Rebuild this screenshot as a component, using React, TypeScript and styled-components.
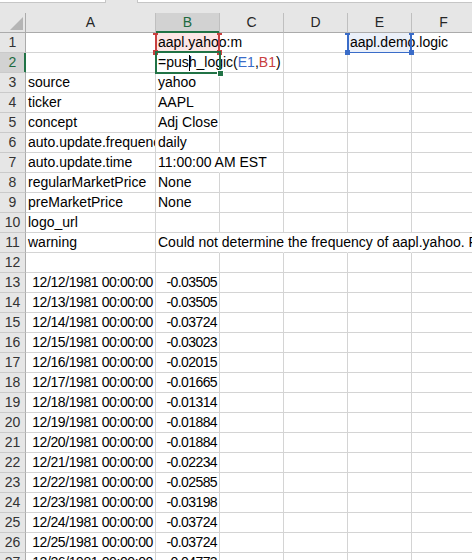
import styled, { createGlobalStyle } from 'styled-components';

const GRID = '#d4d4d4';
const HEAD_BG = '#e6e6e6';
const HEAD_LINE = '#ababab';
const SEL_BG = '#d2d2d2';
const GREEN = '#217346';
const RED = '#c8403f';
const BLUE = '#3a6cc8';
const PINK = '#fce6e6';
const BLUE_FILL = '#ebf0f9';

const GlobalStyle = createGlobalStyle`
  html, body {
    margin: 0;
    padding: 0;
    background: #fff;
  }
`;

const Page = styled.div`
  width: 472px;
  height: 560px;
  overflow: hidden;
  background: #fff;
  font-family: 'Liberation Sans', Arial, sans-serif;
  font-size: 14px;
  color: #000;
`;

const FormulaStrip = styled.div`
  display: flex;
  gap: 31px;
  height: 13px;
  background: ${HEAD_BG};
`;

const NameBox = styled.div`
  width: 106px;
  height: 3px;
  box-sizing: border-box;
  background: #fff;
  border-right: 1px solid #c6c6c6;
  border-bottom: 1px solid #c6c6c6;
`;

const FormulaInput = styled.div`
  flex: 1;
  height: 3px;
  box-sizing: border-box;
  background: #fff;
  border-left: 1px solid #c6c6c6;
  border-bottom: 1px solid #c6c6c6;
`;

const Row = styled.div`
  display: flex;
  height: 20px;
`;

const HeaderRow = styled(Row)`
  position: relative;
  z-index: 3;
`;

const Corner = styled.div`
  flex: 0 0 26px;
  box-sizing: border-box;
  height: 20px;
  padding: 0 2px 2px 0;
  display: flex;
  align-items: flex-end;
  justify-content: flex-end;
  background: ${HEAD_BG};
  border-right: 1px solid ${HEAD_LINE};
  border-bottom: 1px solid ${HEAD_LINE};
`;

const ColHead = styled.div<{ $w: number; $active?: boolean }>`
  flex: 0 0 ${({ $w }) => $w}px;
  box-sizing: border-box;
  height: 20px;
  background: ${({ $active }) => ($active ? SEL_BG : HEAD_BG)};
  border-right: 1px solid #bfbfbf;
  border-bottom: 1px solid ${({ $active }) => ($active ? GREEN : HEAD_LINE)};
  box-shadow: ${({ $active }) => ($active ? `inset 0 -1px 0 ${GREEN}` : 'none')};
  color: ${({ $active }) => ($active ? '#1d6a3f' : '#262626')};
  text-align: center;
  line-height: 19px;
`;

const RowHead = styled.div<{ $active?: boolean }>`
  flex: 0 0 26px;
  box-sizing: border-box;
  height: 20px;
  background: ${({ $active }) => ($active ? SEL_BG : HEAD_BG)};
  border-right: 1px solid ${({ $active }) => ($active ? GREEN : HEAD_LINE)};
  border-bottom: 1px solid #cacaca;
  box-shadow: ${({ $active }) => ($active ? `inset -1px 0 0 ${GREEN}` : 'none')};
  color: ${({ $active }) => ($active ? '#1d6a3f' : '#333')};
  text-align: center;
  line-height: 19px;
`;

const Cell = styled.div<{
  $w: number;
  $open?: boolean;
  $clip?: boolean;
  $right?: boolean;
  $tight?: number;
  $fill?: string;
}>`
  position: relative;
  flex: 0 0 ${({ $w }) => $w}px;
  min-width: 0;
  box-sizing: border-box;
  height: 20px;
  padding: ${({ $right }) => ($right ? '0 2px 0 0' : '0 0 0 2px')};
  border-bottom: 1px solid ${GRID};
  border-right: 1px solid ${({ $open }) => ($open ? 'transparent' : GRID)};
  background: ${({ $fill }) => $fill ?? 'transparent'};
  text-align: ${({ $right }) => ($right ? 'right' : 'left')};
  letter-spacing: ${({ $tight }) => ($tight ? `${$tight}px` : 'normal')};
  line-height: 19px;
  white-space: nowrap;
  overflow: ${({ $clip }) => ($clip ? 'hidden' : 'visible')};
`;

const RefFrame = styled.div<{ $color: string }>`
  position: absolute;
  z-index: 2;
  left: -1px;
  right: -1px;
  top: -1px;
  bottom: -1px;
  box-shadow: inset 2px 0 0 ${({ $color }) => $color}, inset -2px 0 0 ${({ $color }) => $color},
    inset 0 1px 0 ${({ $color }) => $color}, inset 0 -1px 0 ${({ $color }) => $color};
  pointer-events: none;
`;

const Handle = styled.div<{ $color: string; $x: 'left' | 'right'; $y: 'top' | 'bottom' }>`
  position: absolute;
  width: 5px;
  height: 5px;
  background: ${({ $color }) => $color};
  ${({ $x }) => $x}: -2px;
  ${({ $y }) => $y}: -2px;
`;

const SelFrame = styled.div`
  position: absolute;
  z-index: 2;
  left: -1px;
  right: -2px;
  top: -2px;
  bottom: -2px;
  border: 2px solid ${GREEN};
  pointer-events: none;
`;

const FillHandle = styled.div`
  position: absolute;
  right: -5px;
  bottom: -5px;
  width: 5px;
  height: 5px;
  background: ${GREEN};
  border: 1px solid #fff;
`;

const Caret = styled.span`
  display: inline-block;
  width: 1px;
  height: 16px;
  margin-right: -1px;
  background: #000;
  vertical-align: -4px;
`;

const RefText = styled.span<{ $color: string }>`
  color: ${({ $color }) => $color};
`;

const COLS = [
  { key: 'A', w: 130 },
  { key: 'B', w: 64 },
  { key: 'C', w: 64 },
  { key: 'D', w: 64 },
  { key: 'E', w: 64 },
  { key: 'F', w: 64 },
];

const infoRows: { a: string; b: string; open?: number[] }[] = [
  { a: 'source', b: 'yahoo' },
  { a: 'ticker', b: 'AAPL' },
  { a: 'concept', b: 'Adj Close' },
  { a: 'auto.update.frequency', b: 'daily' },
  { a: 'auto.update.time', b: '11:00:00 AM EST', open: [1] },
  { a: 'regularMarketPrice', b: 'None' },
  { a: 'preMarketPrice', b: 'None' },
  { a: 'logo_url', b: '' },
  { a: 'warning', b: 'Could not determine the frequency of aapl.yahoo. Please', open: [1, 2, 3, 4, 5] },
  { a: '', b: '' },
];

const series: [string, string][] = [
  ['12/12/1981 00:00:00', '-0.03505'],
  ['12/13/1981 00:00:00', '-0.03505'],
  ['12/14/1981 00:00:00', '-0.03724'],
  ['12/15/1981 00:00:00', '-0.03023'],
  ['12/16/1981 00:00:00', '-0.02015'],
  ['12/17/1981 00:00:00', '-0.01665'],
  ['12/18/1981 00:00:00', '-0.01314'],
  ['12/19/1981 00:00:00', '-0.01884'],
  ['12/20/1981 00:00:00', '-0.01884'],
  ['12/21/1981 00:00:00', '-0.02234'],
  ['12/22/1981 00:00:00', '-0.02585'],
  ['12/23/1981 00:00:00', '-0.03198'],
  ['12/24/1981 00:00:00', '-0.03724'],
  ['12/25/1981 00:00:00', '-0.03724'],
  ['12/26/1981 00:00:00', '-0.04773'],
];

function Handles({ color }: { color: string }) {
  return (
    <>
      <Handle $color={color} $x="left" $y="top" />
      <Handle $color={color} $x="right" $y="top" />
      <Handle $color={color} $x="left" $y="bottom" />
      <Handle $color={color} $x="right" $y="bottom" />
    </>
  );
}

function EmptyCells({ from, open = [] }: { from: number; open?: number[] }) {
  return (
    <>
      {COLS.slice(from).map((c, i) => (
        <Cell key={c.key} $w={c.w} $open={open.includes(i + from)} />
      ))}
    </>
  );
}

export default function App() {
  return (
    <Page>
      <GlobalStyle />
      <FormulaStrip>
        <NameBox />
        <FormulaInput />
      </FormulaStrip>

      <HeaderRow>
        <Corner>
          <svg width="13" height="13" viewBox="0 0 13 13">
            <polygon points="13,0 13,13 0,13" fill="#b5b5b5" />
          </svg>
        </Corner>
        {COLS.map((c) => (
          <ColHead key={c.key} $w={c.w} $active={c.key === 'B'}>
            {c.key}
          </ColHead>
        ))}
      </HeaderRow>

      <Row>
        <RowHead>1</RowHead>
        <Cell $w={130} />
        <Cell $w={64} $open $fill={PINK}>
          aapl.yahoo:m
          <RefFrame $color={RED}>
            <Handles color={RED} />
          </RefFrame>
        </Cell>
        <Cell $w={64} />
        <Cell $w={64} />
        <Cell $w={64} $open $fill={BLUE_FILL}>
          aapl.demo.logic
          <RefFrame $color={BLUE}>
            <Handles color={BLUE} />
          </RefFrame>
        </Cell>
        <Cell $w={64} />
      </Row>

      <Row>
        <RowHead $active>2</RowHead>
        <Cell $w={130} />
        <Cell $w={64} $open>
          =pus
          <Caret />h_logic(<RefText $color={BLUE}>E1</RefText>,<RefText $color={RED}>B1</RefText>)
          <SelFrame>
            <FillHandle />
          </SelFrame>
        </Cell>
        <EmptyCells from={2} />
      </Row>

      {infoRows.map((r, i) => (
        <Row key={i}>
          <RowHead>{i + 3}</RowHead>
          <Cell $w={130} $clip={r.b !== ''}>
            {r.a}
          </Cell>
          <Cell $w={64} $open={r.open?.includes(1)}>
            {r.b}
          </Cell>
          <EmptyCells from={2} open={r.open} />
        </Row>
      ))}

      {series.map(([d, v], i) => (
        <Row key={d}>
          <RowHead>{i + 13}</RowHead>
          <Cell $w={130} $right $tight={-0.4}>
            {d}
          </Cell>
          <Cell $w={64} $right $tight={-0.6}>
            {v}
          </Cell>
          <EmptyCells from={2} />
        </Row>
      ))}
    </Page>
  );
}
